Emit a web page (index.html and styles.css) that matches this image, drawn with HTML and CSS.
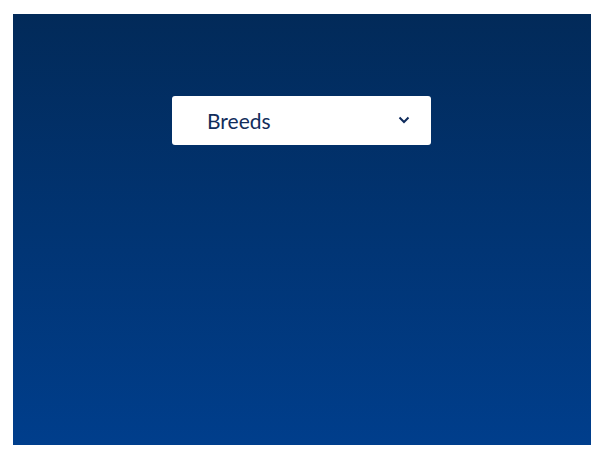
FILE: index.html
```html
<!DOCTYPE html>
<html>
<head>
<meta charset="utf-8">
<link rel="stylesheet" href="styles.css">
</head>
<body>
<div class="panel">
  <div class="select">
    <span class="label">Breeds</span>
    <svg class="chev" width="12" height="8" viewBox="0 0 12 8"><path d="M1.5 1.5 L6 6 L10.5 1.5" fill="none" stroke="#0e2b5c" stroke-width="2"/></svg>
  </div>
</div>
</body>
</html>
```
FILE: styles.css
```css
html, body { margin: 0; padding: 0; background: #fff; }
body { padding: 14px 15px 11px 13px; }
.panel {
  height: 431px;
  background: linear-gradient(to bottom, #022a59 0%, #003e8c 100%);
  display: flex;
  flex-direction: column;
  align-items: flex-start;
  padding: 82px 0 0 159px;
  box-sizing: border-box;
}
.select {
  width: 259px;
  height: 49px;
  background: #fff;
  border-radius: 3px;
  display: flex;
  align-items: center;
  justify-content: space-between;
  padding: 0 21px 1px 35px;
  box-sizing: border-box;
}
.label {
  font-family: Lato, sans-serif;
  font-size: 21px;
  color: #112d5b;
}
.chev { display: block; }
```
